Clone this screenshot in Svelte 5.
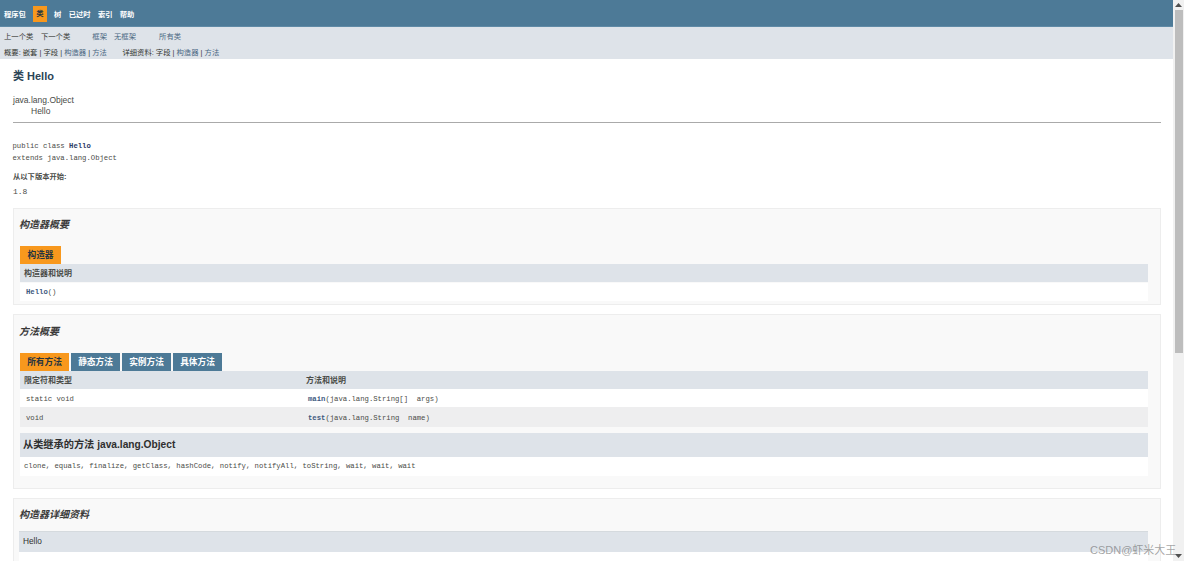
<script>
  const navItems = ['程序包', '类', '树', '已过时', '索引', '帮助'];
  const tabs = ['所有方法', '静态方法', '实例方法', '具体方法'];
</script>

<div class="page">
  <div class="main">
    <nav class="topnav">
      {#each navItems as item}
        <span class="navitem" class:active={item === '类'}>{item}</span>
      {/each}
    </nav>
    <div class="subnav">
      <div class="subrow one">
        <span class="grp"><span>上一个类</span><span>下一个类</span></span>
        <span class="grp links"><span>框架</span><span>无框架</span></span>
        <span class="link">所有类</span>
      </div>
      <div class="subrow two">
        <span>概要: 嵌套 | 字段 | <a href="#c">构造器</a> | <a href="#m">方法</a></span>
        <span>详细资料: 字段 | <a href="#c">构造器</a> | <a href="#m">方法</a></span>
      </div>
    </div>

    <div class="content">
      <h2 class="title">类 Hello</h2>
      <div class="tree">
        <div>java.lang.Object</div>
        <div class="indent">Hello</div>
      </div>
      <hr />
      <pre class="sig">public class <b>Hello</b>
extends java.lang.Object</pre>
      <div class="since">从以下版本开始:</div>
      <div class="ver">1.8</div>

      <section class="box first">
        <h3>构造器概要</h3>
        <div class="tabs"><span class="tab active wide">构造器</span></div>
        <div class="thead"><span>构造器和说明</span></div>
        <div class="row white code"><span class="cell"><b class="lnk">Hello</b>()</span></div>
      </section>

      <section class="box second">
        <h3>方法概要</h3>
        <div class="tabs">
          {#each tabs as t, i}
            <span class="tab" class:active={i === 0}>{t}</span>
          {/each}
        </div>
        <div class="thead cols"><span>限定符和类型</span><span>方法和说明</span></div>
        <div class="row white code cols"><span class="cell">static void</span><span class="cell"><b class="lnk">main</b>(java.lang.String[]  args)</span></div>
        <div class="row gray code cols"><span class="cell">void</span><span class="cell"><b class="lnk">test</b>(java.lang.String  name)</span></div>
        <h4>从类继承的方法 java.lang.Object</h4>
        <div class="inherited code">clone, equals, finalize, getClass, hashCode, notify, notifyAll, toString, wait, wait, wait</div>
      </section>

      <section class="box third">
        <h3>构造器详细资料</h3>
        <div class="detail-head">Hello</div>
        <div class="detail-body"></div>
      </section>
    </div>
  </div>

  <div class="scrollbar">
    <svg class="arrow" viewBox="0 0 11 10" width="11" height="10"><path d="M5.5 3 L9 7 H2 Z" fill="#505050" /></svg>
    <div class="thumb"></div>
    <div class="track"></div>
    <svg class="arrow" viewBox="0 0 11 10" width="11" height="10"><path d="M2 3 H9 L5.5 7 Z" fill="#505050" /></svg>
  </div>

  <div class="watermark">CSDN@虾米大王</div>
</div>

<style>
  :global(body) { margin: 0; background: #fff; }
  .page {
    position: relative;
    display: flex;
    width: 1184px;
    height: 561px;
    overflow: hidden;
    font-family: "Liberation Sans", "Noto Sans CJK SC", sans-serif;
    color: #353833;
    font-size: 8px;
  }
  .main { width: 1173px; flex: none; }

  .topnav {
    height: 27px;
    background: #4d7a97;
    border-bottom: 1px solid #5f8aa6;
    box-sizing: border-box;
    display: flex;
    align-items: center;
    padding: 2px 0 0 4px;
    gap: 7px;
    color: #fff;
    font-size: 7.3px;
    font-weight: 700;
  }
  .navitem.active {
    background: #f8981d;
    color: #253441;
    height: 16px;
    box-sizing: border-box;
    line-height: 8px;
    width: 14px;
    display: flex;
    align-items: center;
    justify-content: center;
  }
  .navitem:nth-child(4) { margin-left: 0.5px; }
  .navitem:nth-child(5) { margin-left: 0.5px; }

  .subnav { height: 32px; background: #dee3e9; font-size: 7.35px; }
  .subrow { display: flex; align-items: center; height: 16px; padding-left: 4px; }
  .subrow.one { gap: 22px; color: #353833; }
  .subrow.two { gap: 15.5px; }
  .grp { display: flex; gap: 7.5px; }
  .links { gap: 7px; }
  .link { margin-left: 1px; }
  .links, .link { color: #4a6782; }
  .subrow a { color: #4a6782; text-decoration: none; }

  .content { padding: 0 12px 0 13px; }
  .title {
    margin: 0;
    padding-top: 11px;
    height: 23px;
    line-height: 13px;
    box-sizing: border-box;
    font-size: 11px;
    font-weight: 700;
    color: #2c4557;
  }
  .tree { margin-top: 13px; font-size: 8.5px; line-height: 11px; color: #4a4c48; }
  .indent { padding-left: 18px; }
  hr { border: 0; border-top: 1px solid #aaa; margin: 5px 0 0; height: 0; }
  .sig {
    margin: 17px 0 0 -0.5px;
    font-family: "Liberation Mono", monospace;
    font-size: 7.25px;
    line-height: 12px;
    color: #4a4c48;
  }
  .sig b { color: #2c3a66; }
  .since { margin-top: 7px; height: 12px; line-height: 12px; font-size: 7.3px; font-weight: 700; color: #4a4c48; }
  .ver {
    margin-top: 3px;
    height: 12px;
    line-height: 12px;
    font-family: "Liberation Mono", monospace;
    font-size: 8px;
    color: #4a4c48;
  }

  .box {
    background: #f9f9f9;
    border: 1px solid #ededed;
    box-sizing: border-box;
    padding: 0 12px 0 6px;
  }
  .box.first { margin-top: 10px; height: 97px; }
  .box.second { margin-top: 9px; height: 175px; }
  .box.third { margin-top: 9px; height: 80px; }
  h3 {
    margin: 0 0 0 -1px;
    height: 37px;
    padding-top: 9px;
    box-sizing: border-box;
    line-height: 13px;
    font-size: 10px;
    font-weight: 700;
    font-style: italic;
    color: #3a3a3a;
  }
  .second h3 { height: 38px; padding-top: 10px; }
  .third h3 { height: 32px; }
  .tabs { display: flex; gap: 2px; height: 18px; }
  .tab {
    width: 49px;
    height: 18px;
    line-height: 18px;
    text-align: center;
    background: #4d7a97;
    color: #fff;
    font-size: 8.7px;
    font-weight: 700;
  }
  .tab.active { background: #f8981d; color: #253441; }
  .tab.wide { width: 41px; }
  .thead {
    height: 18px;
    line-height: 19px;
    background: #dee3e9;
    padding-left: 4px;
    font-size: 8px;
    font-weight: 700;
    color: #4a4c48;
  }
  .cols { display: grid; grid-template-columns: 282px 1fr; }
  .row { height: 18px; line-height: 20px; }
  .row.white { background: #fff; }
  .row.gray { background: #eeeeef; height: 20px; line-height: 23px; }
  .first .row { margin-top: 1px; line-height: 18px; }
  .code { font-family: "Liberation Mono", monospace; font-size: 7.25px; white-space: pre; color: #4a4c48; }
  .cell { padding-left: 6px; }
  .lnk { color: #3d5a80; }
  h4 {
    margin: 6px 0 0 0;
    height: 24px;
    line-height: 24px;
    background: #dee3e9;
    padding-left: 3px;
    font-size: 10.2px;
    font-weight: 700;
    color: #2f2f2f;
  }
  .inherited {
    height: 19px;
    line-height: 18px;
    background: #fff;
    padding-left: 4px;
  }
  .detail-head {
    margin-left: -1px;
    height: 21px;
    line-height: 19px;
    background: #dee3e9;
    border-top: 1px solid #d5dade;
    box-sizing: border-box;
    padding-left: 4px;
    font-size: 8.3px;
    font-weight: 400;
    color: #2f2f2f;
  }
  .detail-body { margin-left: -1px; height: 20px; background: #fff; }

  .scrollbar {
    width: 11px;
    flex: none;
    background: #f1f1f1;
    display: flex;
    flex-direction: column;
  }
  .arrow { display: block; flex: none; }
  .thumb { height: 343px; background: #bdbdbd; flex: none; margin: 0 1px 0 2px; }
  .track { flex: 1; }

  .watermark {
    position: absolute;
    left: 1090px;
    top: 543px;
    font-size: 11px;
    line-height: 14px;
    color: rgba(90, 90, 90, 0.55);
    white-space: nowrap;
  }
</style>
